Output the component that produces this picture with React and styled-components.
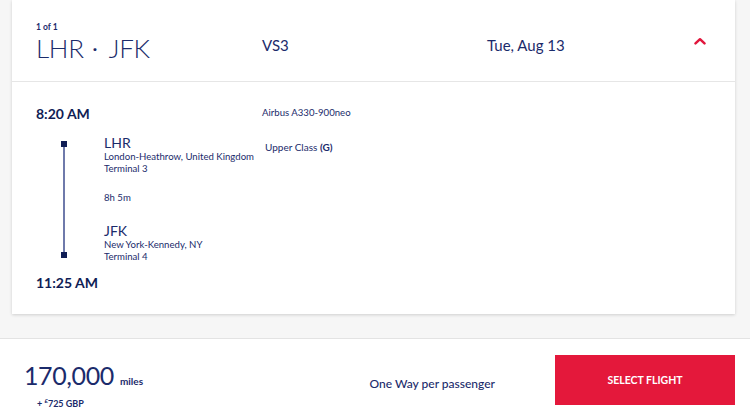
import React from "react";
import styled, { createGlobalStyle } from "styled-components";

const GlobalStyle = createGlobalStyle`
  html, body {
    margin: 0;
    padding: 0;
    background: #f6f6f6;
    font-family: Lato, "Open Sans", sans-serif;
    color: #1b2b6b;
  }
`;

const navy = "#1b2b6b";
const deep = "#0f1d55";

function Chevron() {
  return (
    <svg width="14" height="8" viewBox="0 0 14 8">
      <polyline
        points="2.5,6.3 7,2.2 11.5,6.3"
        fill="none"
        stroke="#e1163c"
        strokeWidth="2.5"
        strokeLinecap="round"
        strokeLinejoin="round"
      />
    </svg>
  );
}

export default function App() {
  return (
    <>
      <GlobalStyle />
      <Page>
        <Card>
          <Header>
            <Route>
              <Count>1 of 1</Count>
              <Cities>
                LHR<Dot>·</Dot>JFK
              </Cities>
            </Route>
            <HeaderText>VS3</HeaderText>
            <HeaderText>Tue, Aug 13</HeaderText>
            <Toggle>
              <Chevron />
            </Toggle>
          </Header>
          <Details>
            <Journey>
              <Time>8:20 AM</Time>
              <Itinerary>
                <Rail>
                  <Stop />
                  <Line />
                  <Stop />
                </Rail>
                <Stops>
                  <Code>LHR</Code>
                  <Small>London-Heathrow, United Kingdom</Small>
                  <Small>Terminal 3</Small>
                  <Duration>8h 5m</Duration>
                  <Code>JFK</Code>
                  <Small>New York-Kennedy, NY</Small>
                  <Small>Terminal 4</Small>
                </Stops>
              </Itinerary>
              <Time $after>11:25 AM</Time>
            </Journey>
            <Info>
              <Small>Airbus A330-900neo</Small>
              <Cabin>
                Upper Class <b>(G)</b>
              </Cabin>
            </Info>
          </Details>
        </Card>
        <Footer>
          <Price>
            <Miles>
              170,000 <span>miles</span>
            </Miles>
            <Fees>
              + <sup>£</sup>725 GBP
            </Fees>
          </Price>
          <Fare>One Way per passenger</Fare>
          <SelectButton>SELECT FLIGHT</SelectButton>
        </Footer>
      </Page>
    </>
  );
}

const Page = styled.div`
  display: flex;
  flex-direction: column;
  min-height: 418px;
  overflow: hidden;
`;

const Card = styled.div`
  margin: 0 15px 0 12px;
  background: #fff;
  box-shadow: 0 1px 3px rgba(0, 0, 0, 0.16);
`;

const Header = styled.div`
  display: grid;
  grid-template-columns: 226px 225px 1fr auto;
  align-items: center;
  height: 82px;
  padding: 0 28px 0 24px;
  box-sizing: border-box;
  border-bottom: 1px solid #e6e6e6;
`;

const Route = styled.div`
  display: flex;
  flex-direction: column;
  padding-top: 4px;
`;

const Count = styled.div`
  font-size: 8.5px;
  font-weight: 700;
  line-height: 10px;
  color: ${navy};
`;

const Cities = styled.div`
  font-size: 26px;
  font-weight: 300;
  line-height: 32px;
  color: ${navy};
  letter-spacing: -0.3px;
`;

const Dot = styled.span`
  display: inline-block;
  margin: 0 12px 0 9px;
  font-weight: 700;
  font-size: 16px;
  vertical-align: 4px;
`;

const HeaderText = styled.div`
  font-size: 15px;
  color: ${navy};
  padding-top: 8px;
`;

const Toggle = styled.div`
  display: flex;
  align-items: center;
  padding-top: 1px;
`;

const Details = styled.div`
  display: grid;
  grid-template-columns: 226px 1fr;
  padding: 23px 24px 22px 24px;
`;

const Journey = styled.div`
  display: flex;
  flex-direction: column;
`;

const Time = styled.div`
  font-size: 14px;
  font-weight: 700;
  line-height: 18px;
  color: ${deep};
  margin-top: ${(p) => (p.$after ? "11px" : "0")};
`;

const Itinerary = styled.div`
  display: flex;
  margin-top: 11px;
`;

const Rail = styled.div`
  display: flex;
  flex-direction: column;
  align-items: center;
  width: 6px;
  margin: 7px 37px 5px 25px;
`;

const Stop = styled.div`
  width: 6px;
  height: 6px;
  background: ${deep};
  flex: none;
`;

const Line = styled.div`
  flex: 1;
  width: 1.5px;
  background: #6f7aab;
`;

const Stops = styled.div`
  display: flex;
  flex-direction: column;
`;

const Code = styled.div`
  font-size: 14px;
  line-height: 17px;
  color: ${navy};
`;

const Small = styled.div`
  font-size: 9.6px;
  line-height: 12px;
  color: ${navy};
`;

const Duration = styled(Small)`
  margin: 17px 0 17.5px;
`;

const Info = styled.div`
  display: flex;
  flex-direction: column;
  padding-top: 2px;
`;

const Cabin = styled(Small)`
  font-size: 10px;
  margin: 22px 0 0 3px;
  b {
    font-weight: 700;
  }
`;

const Footer = styled.div`
  flex: 1;
  display: flex;
  align-items: flex-start;
  margin-top: 24px;
  padding: 16px 15px 0 24px;
  background: #fff;
  border-top: 1px solid #e3e3e3;
`;

const Price = styled.div`
  flex: 1;
  display: flex;
  flex-direction: column;
  padding-top: 6px;
`;

const Miles = styled.div`
  font-size: 25px;
  line-height: 28px;
  letter-spacing: -0.4px;
  color: ${navy};
  span {
    font-size: 10px;
    font-weight: 700;
    letter-spacing: 0;
  }
`;

const Fees = styled.div`
  font-size: 9px;
  font-weight: 700;
  line-height: 12px;
  padding: 0 0 0 13px;
  color: ${navy};
  sup {
    font-size: 6px;
  }
`;

const Fare = styled.div`
  font-size: 12px;
  font-weight: 500;
  color: ${navy};
  margin: 21px 60px 0 0;
`;

const SelectButton = styled.button`
  width: 180px;
  height: 50px;
  border: none;
  background: #e4183b;
  color: #fff;
  font-family: Lato, "Open Sans", sans-serif;
  font-size: 10.5px;
  font-weight: 700;
  cursor: pointer;
`;
